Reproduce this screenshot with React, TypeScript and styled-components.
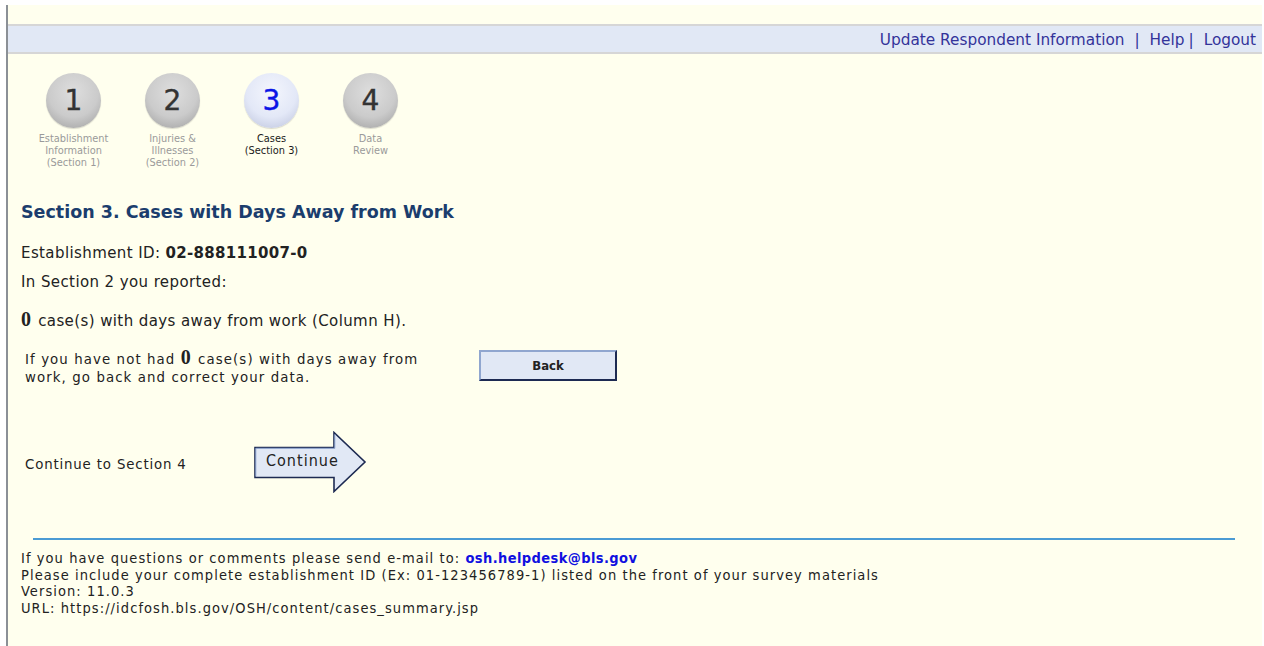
import React from "react";
import styled, { createGlobalStyle } from "styled-components";

const GlobalStyle = createGlobalStyle`
  html, body { margin: 0; padding: 0; background: #ffffff; }
  body { font-family: "DejaVu Sans", Verdana, sans-serif; }
`;

const Frame = styled.div`
  margin: 5px 2px 0 6px;
  min-height: 641px;
  border-left: 2px solid #8b9096;
  background: #ffffee;
  padding-top: 19px;
  box-sizing: border-box;
`;

const NavBar = styled.div`
  height: 24px;
  border-top: 2px solid #d6d6d6;
  border-bottom: 2px solid #d6d6d6;
  background: #e1e8f5;
  display: flex;
  justify-content: flex-end;
  align-items: center;
  padding: 2px 6px 0 0;
  box-sizing: content-box;
  font-size: 15.3px;
  color: #33339a;
`;

const NavLink = styled.a`
  color: #33339a;
  text-decoration: none;
`;

const NavSep = styled.span<{ $tight?: boolean }>`
  padding: ${(p) => (p.$tight ? "0 10px 0 4px" : "0 10px")};
`;

const Steps = styled.div`
  display: flex;
  padding: 19px 0 0 16px;
`;

const Step = styled.div`
  width: 99px;
  display: flex;
  flex-direction: column;
  align-items: center;
`;

const Bubble = styled.div<{ $current?: boolean }>`
  width: 55px;
  height: 55px;
  border-radius: 50%;
  display: flex;
  align-items: center;
  justify-content: center;
  font-size: 28px;
  color: ${(p) => (p.$current ? "#0a14e6" : "#333333")};
  -webkit-text-stroke: 0.4px currentColor;
  background: ${(p) =>
    p.$current
      ? "radial-gradient(circle at 50% 35%, #f4f6fd 0%, #e3e8f7 55%, #b9c0da 100%)"
      : "radial-gradient(circle at 50% 35%, #dedede 0%, #cbcbcb 55%, #9c9c9c 100%)"};
  box-shadow: 0 1px 1px rgba(0, 0, 0, 0.15);
`;

const StepLabel = styled.div<{ $current?: boolean }>`
  margin-top: 5px;
  font-size: 9.8px;
  line-height: 12px;
  text-align: center;
  color: ${(p) => (p.$current ? "#1a1a1a" : "#9a9a9a")};
`;

const Content = styled.div`
  padding: 0 0 0 13px;
`;

const Heading = styled.h1`
  margin: 32px 0 0 0;
  font-size: 17.5px;
  font-weight: bold;
  color: #1b3d6d;
  line-height: 22px;
`;

const Line = styled.p<{ $top: number }>`
  margin: ${(p) => p.$top}px 0 0 0;
  font-size: 15px;
  letter-spacing: 0.4px;
  line-height: 18px;
  color: #222222;
`;

const Strong = styled.b`
  font-weight: bold;
  letter-spacing: 0.3px;
`;

const Zero = styled.b`
  font-family: "Liberation Serif", "Times New Roman", serif;
  font-size: 20px;
  line-height: 0;
  font-weight: bold;
  letter-spacing: 0;
  margin-right: 2px;
`;

const narrowText = `
  font-family: "DejaVu Sans Condensed", Tahoma, sans-serif;
  letter-spacing: 0.85px;
  color: #222222;
`;

const BackRow = styled.div`
  display: flex;
  align-items: flex-start;
  margin-top: 20px;
  padding-left: 4px;
`;

const BackText = styled.div`
  ${narrowText}
  width: 454px;
  font-size: 14.8px;
  letter-spacing: 1.1px;
  line-height: 18px;
`;

const BackButton = styled.button`
  width: 138px;
  height: 31px;
  margin-top: 0;
  background: #e1e8f5;
  border-style: solid;
  border-width: 2px;
  border-color: #90a6cf #1d2a52 #1d2a52 #90a6cf;
  font-family: "DejaVu Sans Condensed", Tahoma, sans-serif;
  font-weight: bold;
  font-size: 13px;
  color: #222222;
  padding: 0;
`;

const ContinueRow = styled.div`
  display: flex;
  align-items: center;
  margin-top: 45px;
  padding-left: 4px;
`;

const ContinueLabel = styled.div`
  ${narrowText}
  width: 229px;
  font-size: 14.8px;
  padding-top: 2px;
`;

const Rule = styled.hr`
  margin: 45px 27px 0 25px;
  border: 0;
  border-top: 2px solid #4b9bd4;
  height: 0;
`;

const Footer = styled.div`
  ${narrowText}
  margin-top: 10px;
  font-size: 14.5px;
  letter-spacing: 1.07px;
  line-height: 16.6px;
`;

const Mail = styled.a`
  color: #1010e0;
  font-weight: bold;
  letter-spacing: 0.4px;
  text-decoration: none;
`;

function ContinueArrow() {
  return (
    <svg width="113" height="62" viewBox="0 0 113 62">
      <path
        d="M1 16.5 H80 V1.5 L111 31 L80 60.5 V46.5 H1 Z"
        fill="#e1e8f5"
        stroke="#1d2a52"
        strokeWidth="1.6"
        strokeLinejoin="miter"
      />
      <path
        d="M1.8 45.5 V17.3 H80.8 V3.2"
        fill="none"
        stroke="#8ea4cf"
        strokeWidth="1"
      />
      <text
        x="12"
        y="35"
        fontFamily="'DejaVu Sans Condensed', Tahoma, sans-serif"
        fontSize="16"
        letterSpacing="1"
        fill="#222222"
      >
        Continue
      </text>
    </svg>
  );
}

const steps = [
  { n: "1", label: ["Establishment", "Information", "(Section 1)"] },
  { n: "2", label: ["Injuries &", "Illnesses", "(Section 2)"] },
  { n: "3", label: ["Cases", "(Section 3)"], current: true },
  { n: "4", label: ["Data", "Review"] },
];

export default function App() {
  return (
    <>
      <GlobalStyle />
      <Frame>
        <NavBar>
          <NavLink href="#">Update Respondent Information</NavLink>
          <NavSep>|</NavSep>
          <NavLink href="#">Help</NavLink>
          <NavSep $tight>|</NavSep>
          <NavLink href="#">Logout</NavLink>
        </NavBar>

        <Steps>
          {steps.map((s) => (
            <Step key={s.n}>
              <Bubble $current={s.current}>{s.n}</Bubble>
              <StepLabel $current={s.current}>
                {s.label.map((l) => (
                  <div key={l}>{l}</div>
                ))}
              </StepLabel>
            </Step>
          ))}
        </Steps>

        <Content>
          <Heading>Section 3. Cases with Days Away from Work</Heading>
          <Line $top={21}>
            Establishment ID: <Strong>02-888111007-0</Strong>
          </Line>
          <Line $top={11}>In Section 2 you reported:</Line>
          <Line $top={21}>
            <Zero>0</Zero> case(s) with days away from work (Column H).
          </Line>

          <BackRow>
            <BackText>
              If you have not had <Zero>0</Zero> case(s) with days away from
              <br />
              work, go back and correct your data.
            </BackText>
            <BackButton type="button">Back</BackButton>
          </BackRow>

          <ContinueRow>
            <ContinueLabel>Continue to Section 4</ContinueLabel>
            <ContinueArrow />
          </ContinueRow>
        </Content>

        <Rule />

        <Content>
          <Footer>
            If you have questions or comments please send e-mail to:{" "}
            <Mail href="#">osh.helpdesk@bls.gov</Mail>
            <br />
            Please include your complete establishment ID (Ex: 01-123456789-1)
            listed on the front of your survey materials
            <br />
            Version: 11.0.3
            <br />
            URL: https://idcfosh.bls.gov/OSH/content/cases_summary.jsp
          </Footer>
        </Content>
      </Frame>
    </>
  );
}
